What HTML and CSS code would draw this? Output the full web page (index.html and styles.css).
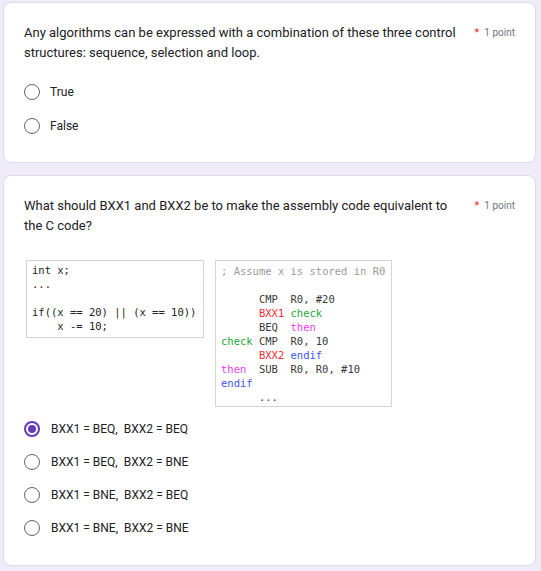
FILE: index.html
```html
<!DOCTYPE html>
<html lang="en">
<head>
<meta charset="utf-8">
<title>Quiz</title>
<link rel="stylesheet" href="styles.css">
</head>
<body>
<div class="page">
  <section class="card card-one">
    <div class="q-head">
      <div class="q-title">Any algorithms can be expressed with a combination of these three control structures: sequence, selection and loop.</div>
      <div class="q-meta"><span class="req">*</span><span class="pts">1 point</span></div>
    </div>
    <div class="options opts-one">
      <label class="opt"><span class="radio"></span><span class="opt-text">True</span></label>
      <label class="opt"><span class="radio"></span><span class="opt-text">False</span></label>
    </div>
  </section>

  <section class="card card-two">
    <div class="q-head">
      <div class="q-title">What should BXX1 and BXX2 be to make the assembly code equivalent to the C code?</div>
      <div class="q-meta"><span class="req">*</span><span class="pts">1 point</span></div>
    </div>
    <div class="code-row">
      <div class="code code-c">
        <div class="ln">int x;</div>
        <div class="ln">...</div>
        <div class="ln"> </div>
        <div class="ln">if((x == 20) || (x == 10))</div>
        <div class="ln">    x -= 10;</div>
      </div>
      <div class="code code-asm">
        <div class="ln cm">; Assume x is stored in R0</div>
        <div class="ln"> </div>
        <div class="ln"><span class="lbl"></span><span class="op">CMP</span><span>R0, #20</span></div>
        <div class="ln"><span class="lbl"></span><span class="op red">BXX1</span><span class="grn">check</span></div>
        <div class="ln"><span class="lbl"></span><span class="op">BEQ</span><span class="mag">then</span></div>
        <div class="ln"><span class="lbl grn">check</span><span class="op">CMP</span><span>R0, 10</span></div>
        <div class="ln"><span class="lbl"></span><span class="op red">BXX2</span><span class="blu">endif</span></div>
        <div class="ln"><span class="lbl mag">then</span><span class="op">SUB</span><span>R0, R0, #10</span></div>
        <div class="ln"><span class="lbl blu">endif</span></div>
        <div class="ln"><span class="lbl"></span><span>...</span></div>
      </div>
    </div>
    <div class="options opts-two">
      <label class="opt"><span class="radio on"></span><span class="opt-text">BXX1 = BEQ,&nbsp; BXX2 = BEQ</span></label>
      <label class="opt"><span class="radio"></span><span class="opt-text">BXX1 = BEQ,&nbsp; BXX2 = BNE</span></label>
      <label class="opt"><span class="radio"></span><span class="opt-text">BXX1 = BNE,&nbsp; BXX2 = BEQ</span></label>
      <label class="opt"><span class="radio"></span><span class="opt-text">BXX1 = BNE,&nbsp; BXX2 = BNE</span></label>
    </div>
  </section>
</div>
</body>
</html>
```

FILE: styles.css
```css
html, body {
  margin: 0;
  padding: 0;
  background: #f0ebf8;
}

body {
  font-family: Roboto, "Liberation Sans", Arial, sans-serif;
  color: #202124;
}

.page {
  padding: 2px 5px 0 3px;
  display: flex;
  flex-direction: column;
  gap: 12px;
}

.card {
  width: 533px;
  box-sizing: border-box;
  background: #ffffff;
  border: 1px solid #dadce0;
  border-radius: 8px;
  padding: 20px 20px 0 20px;
}

.card-one {
  height: 161px;
}

.card-two {
  height: 391px;
}

.q-head {
  display: flex;
  align-items: flex-start;
  gap: 12px;
}

.q-title {
  flex: 1;
  font-size: 13px;
  line-height: 20px;
  color: #202124;
}

.q-meta {
  display: flex;
  align-items: center;
  gap: 5px;
  height: 20px;
  white-space: nowrap;
}

.req {
  color: #d93025;
  font-size: 11px;
  line-height: 1;
  position: relative;
  top: -1px;
}

.pts {
  color: #70757a;
  font-size: 10px;
  line-height: 1;
}

.options {
  display: flex;
  flex-direction: column;
}

.opts-one {
  margin-top: 12px;
}

.opts-one .opt {
  height: 34px;
}

.opts-two {
  margin-top: 5px;
}

.opts-two .opt {
  height: 33px;
}

.opt {
  display: flex;
  align-items: center;
  gap: 10px;
}

.opts-two .opt {
  gap: 11px;
}

.radio {
  width: 16px;
  height: 16px;
  box-sizing: border-box;
  border: 1.5px solid #5f6368;
  border-radius: 50%;
  display: flex;
  align-items: center;
  justify-content: center;
  flex: none;
}

.radio.on {
  border: 2px solid #673ab7;
}

.radio.on::after {
  content: "";
  width: 8px;
  height: 8px;
  border-radius: 50%;
  background: #673ab7;
}

.opt-text {
  font-size: 12px;
  line-height: 16px;
  color: #202124;
}

.code-row {
  display: flex;
  align-items: flex-start;
  gap: 11px;
  margin-top: 24px;
  margin-left: 2px;
}

.code {
  box-sizing: border-box;
  border: 1px solid #d4d4d4;
  background: #ffffff;
  font-family: "DejaVu Sans Mono", "Liberation Mono", monospace;
  font-size: 10.5px;
  line-height: 14px;
  color: #333333;
}

.ln {
  height: 14px;
  white-space: pre;
  display: flex;
}

.code-c {
  width: 178px;
  padding: 2px 4px 4px 5px;
  color: #222222;
}

.code-asm {
  width: 177px;
  height: 147px;
  padding: 3px 4px 2px 5px;
  color: #3a3a3a;
}

.lbl {
  width: 6ch;
  flex: none;
}

.op {
  width: 5ch;
  flex: none;
}

.cm { color: #9a9a9a; }
.red { color: #ff2a2a; }
.grn { color: #1aa83a; }
.mag { color: #f03cf0; }
.blu { color: #3a55f0; }
```
